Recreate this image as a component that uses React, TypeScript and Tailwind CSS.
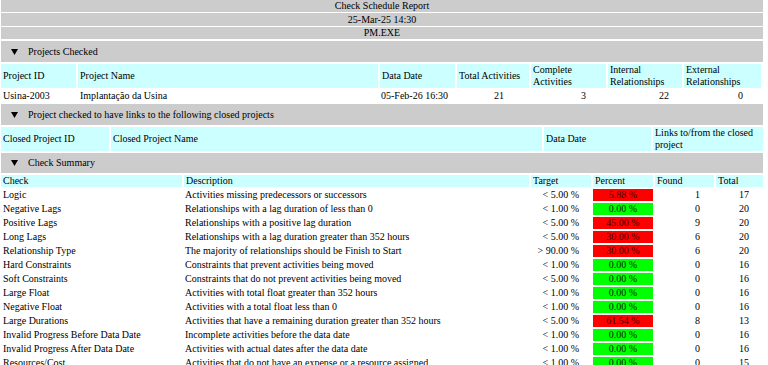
import React from "react";

type Check = [string, string, string, string, boolean, number, number];

const checks: Check[] = [
  ["Logic", "Activities missing predecessors or successors", "< 5.00 %", "5.88 %", false, 1, 17],
  ["Negative Lags", "Relationships with a lag duration of less than 0", "< 1.00 %", "0.00 %", true, 0, 20],
  ["Positive Lags", "Relationships with a positive lag duration", "< 5.00 %", "45.00 %", false, 9, 20],
  ["Long Lags", "Relationships with a lag duration greater than 352 hours", "< 5.00 %", "30.00 %", false, 6, 20],
  ["Relationship Type", "The majority of relationships should be Finish to Start", "> 90.00 %", "30.00 %", false, 6, 20],
  ["Hard Constraints", "Constraints that prevent activities being moved", "< 1.00 %", "0.00 %", true, 0, 16],
  ["Soft Constraints", "Constraints that do not prevent activities being moved", "< 5.00 %", "0.00 %", true, 0, 16],
  ["Large Float", "Activities with total float greater than 352 hours", "< 1.00 %", "0.00 %", true, 0, 16],
  ["Negative Float", "Activities with a total float less than 0", "< 1.00 %", "0.00 %", true, 0, 16],
  ["Large Durations", "Activities that have a remaining duration greater than 352 hours", "< 5.00 %", "61.54 %", false, 8, 13],
  ["Invalid Progress Before Data Date", "Incomplete activities before the data date", "< 1.00 %", "0.00 %", true, 0, 16],
  ["Invalid Progress After Data Date", "Activities with actual dates after the data date", "< 1.00 %", "0.00 %", true, 0, 16],
  ["Resources/Cost", "Activities that do not have an expense or a resource assigned", "< 1.00 %", "0.00 %", true, 0, 15],
];

function Section({ title, h }: { title: string; h: string }) {
  return (
    <div className={`flex items-center bg-[#cccccc] ${h}`}>
      <svg width="7" height="6" viewBox="0 0 7 6" className="ml-[10px] mr-[10px]">
        <polygon points="0,0 7,0 3.5,6" fill="#000" />
      </svg>
      <span>{title}</span>
    </div>
  );
}

function Title({ text, h }: { text: string; h: string }) {
  return <div className={`flex items-center justify-center bg-[#cccccc] ${h}`}>{text}</div>;
}

export default function App() {
  const hc = "bg-[#ccffff] flex items-center pl-[2px] h-[24px]";
  const sh = "bg-[#ccffff] flex items-center pl-[2px] h-[12px]";
  return (
    <div className="w-[768px] h-[365px] overflow-hidden bg-white text-black [font-family:'Liberation_Serif','Times_New_Roman',serif] text-[10px] leading-[12px]">
      <div className="w-[762px] ml-[1px] flex flex-col">
        <Title text="Check Schedule Report" h="h-[12px]" />
        <div className="h-[1px]" />
        <Title text="25-Mar-25 14:30" h="h-[13px]" />
        <div className="h-[1px]" />
        <Title text="PM.EXE" h="h-[12px]" />
        <div className="h-[2px]" />
        <Section title="Projects Checked" h="h-[21px]" />
        <div className="h-[2px]" />
        <div className="grid grid-cols-[75px_300px_75px_72px_75px_74px_77px] gap-[2px]">
          <div className={hc}>Project ID</div>
          <div className={hc}>Project Name</div>
          <div className={hc}>Data Date</div>
          <div className={hc}>Total Activities</div>
          <div className={hc}>Complete Activities</div>
          <div className={hc}>Internal Relationships</div>
          <div className={hc}>External Relationships</div>
          <div className="h-[12px] pl-[2px]">Usina-2003</div>
          <div className="h-[12px] pl-[2px]">Implantação da Usina</div>
          <div className="h-[12px] pl-[1px]">05-Feb-26 16:30</div>
          <div className="h-[12px] text-right pr-[25px]">21</div>
          <div className="h-[12px] text-right pr-[20px]">3</div>
          <div className="h-[12px] text-right pr-[13px]">22</div>
          <div className="h-[12px] text-right pr-[18px]">0</div>
        </div>
        <div className="h-[2px]" />
        <Section title="Project checked to have links to the following closed projects" h="h-[21px]" />
        <div className="h-[2px]" />
        <div className="grid grid-cols-[108px_431px_107px_110px] gap-[2px]">
          <div className={hc}>Closed Project ID</div>
          <div className={hc}>Closed Project Name</div>
          <div className={hc}>Data Date</div>
          <div className={hc}>Links to/from the closed project</div>
        </div>
        <div className="h-[2px]" />
        <Section title="Check Summary" h="h-[20px]" />
        <div className="h-[2px]" />
        <div className="grid grid-cols-[181px_345px_60px_60px_59px_47px] gap-[2px]">
          <div className={sh}>Check</div>
          <div className={sh}>Description</div>
          <div className={sh}>Target</div>
          <div className={sh}>Percent</div>
          <div className={sh}>Found</div>
          <div className={sh}>Total</div>
          {checks.map((c) => (
            <React.Fragment key={c[0]}>
              <div className="h-[12px] pl-[2px] whitespace-nowrap">{c[0]}</div>
              <div className="h-[12px] pl-[1px] whitespace-nowrap">{c[1]}</div>
              <div className="h-[12px] text-right pr-[12px] whitespace-nowrap">{c[2]}</div>
              <div
                className={`h-[12px] text-center ${c[4] ? "bg-[#00ff00] text-[#002200]" : "bg-[#ff0000] text-[#3a0000]"}`}
              >
                {c[3]}
              </div>
              <div className="h-[12px] text-right pr-[14px]">{c[5]}</div>
              <div className="h-[12px] text-right pr-[14px]">{c[6]}</div>
            </React.Fragment>
          ))}
        </div>
      </div>
    </div>
  );
}
